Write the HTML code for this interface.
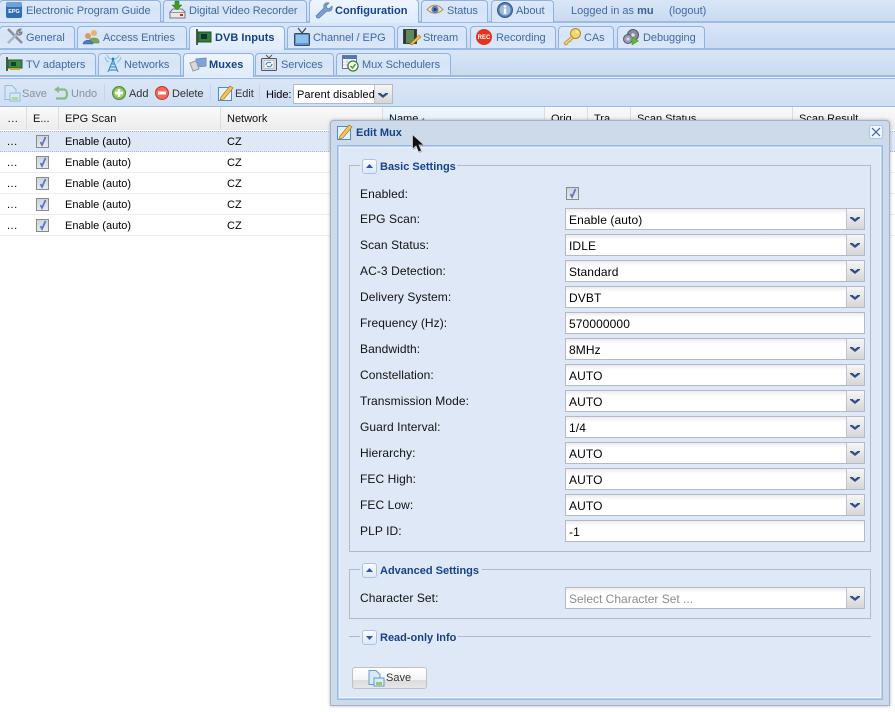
<!DOCTYPE html>
<html><head><meta charset="utf-8"><style>
html,body{margin:0;padding:0;width:895px;height:712px;overflow:hidden;background:#fff;font-family:"Liberation Sans",sans-serif}
div,span,svg{position:absolute;box-sizing:border-box}
svg{overflow:visible}
.bar{left:0;width:895px;background:linear-gradient(#dae6f6,#cedff5 60%,#cbdaee);border-bottom:2px solid #99bbe8}
.t{height:22px;border:1px solid #8db2e3;border-bottom:none;border-radius:4px 4px 0 0;background:linear-gradient(#dfeaf9,#d6e4f7 40%,#dbe8fb);color:#416aa3;font-size:11px;line-height:21px;white-space:nowrap;letter-spacing:-.06px}
.t b{position:absolute;top:0;color:#15428b;font-size:11px;letter-spacing:.03px}
.t span{top:0}
.t.a{background:linear-gradient(#eff5fd,#deecfd);height:24px}
.h{top:107px;height:23px;background:linear-gradient(#fafafa,#ececec);border-right:1px solid #ddd;font-size:11px;line-height:24px;color:#111;padding-left:5px;overflow:hidden;white-space:nowrap}
.r{left:0;width:895px;height:21px;border-bottom:1px solid #ededed;background:#fff}
.c{font-size:11px;color:#000;line-height:21px;top:1px;white-space:nowrap}
.z .c{top:0}
.k{width:13px;height:13px;border:1px solid #8a8a8a;background:linear-gradient(#cdd4de,#e6eaf0)}
.tb{font-size:11px;top:87px;line-height:15px;color:#333;white-space:nowrap;letter-spacing:-.05px}
.sep{top:84px;width:1px;height:17px;background:#c5d6ec}
.l{left:360px;font-size:12px;color:#111;white-space:nowrap;line-height:14px;letter-spacing:.08px}
.f{left:565px;width:300px;height:22px;border:1px solid #b5b8c8;background:linear-gradient(#ececec,#fff 5px);font-size:12px;line-height:22px;color:#000;padding-left:3px;white-space:nowrap;letter-spacing:.1px}
.f i{position:absolute;right:0;top:0;width:17px;height:20px;border-left:1px solid #c0c3cf;background:linear-gradient(#f6f6f6,#d6d6d6)}
.f i:after{content:"";position:absolute;left:3px;top:8px;width:10px;height:5px;background:#2f4f8c;clip-path:polygon(0 0,25% 0,50% 40%,75% 0,100% 0,100% 20%,50% 100%,0 20%)}
.lg{height:15px;background:#dfe8f6;font-size:11px;font-weight:bold;color:#15428b;line-height:15px;white-space:nowrap}
.lg span{top:1px}
.tg{width:15px;height:15px;border:1px solid #a9c3ea;border-radius:3px;background:linear-gradient(#fbfdff,#dce8fa)}
.tg:after{content:"";position:absolute;left:3px;width:7px;height:4px;background:#2f55a4}
.u:after{top:4px;clip-path:polygon(50% 0,100% 100%,0 100%)}
.d:after{top:5px;clip-path:polygon(0 0,100% 0,50% 100%)}
</style></head><body>

<!-- row 1 -->
<div class="bar" style="top:0;height:23px"></div>
<div class="t" style="left:-1px;top:0;width:162px"><span style="left:26px">Electronic Program Guide</span></div>
<div class="t" style="left:163px;top:0;width:144px"><span style="left:25px">Digital Video Recorder</span></div>
<div class="t" style="left:421px;top:0;width:67px"><span style="left:25px">Status</span></div>
<div class="t" style="left:491px;top:0;width:63px"><span style="left:24px">About</span></div>
<div class="t a" style="left:309px;top:-1px;width:110px"><b style="left:25px;top:1px">Configuration</b></div>
<div style="left:571px;top:4px;font-size:11px;color:#416aa3;white-space:nowrap;line-height:14px">Logged in as <b style="color:#3f5f92">mu</b></div>
<div style="left:669px;top:4px;font-size:11px;color:#416aa3;line-height:14px">(logout)</div>

<svg style="left:6px;top:2px" width="16" height="16"><rect width="16" height="16" rx="2" fill="#2f6fb5"/><rect y="0" width="16" height="5" rx="2" fill="#6fa3d6"/><text x="8" y="11" font-size="5.500" font-weight="bold" fill="#fff" text-anchor="middle" font-family="Liberation Sans,sans-serif">EPG</text></svg>
<svg style="left:169px;top:1px" width="17" height="18"><path d="M1 11 4 8h9l3 3v6H1z" fill="#e8e8e8" stroke="#777"/><path d="M1.500 11.500h14" stroke="#999"/><rect x="11" y="13" width="3" height="2" fill="#d22"/><path d="M6 0h4v4h3l-5 5-5-5h3z" fill="#3c9a28" stroke="#2b6f1c" stroke-width=".5"/></svg>
<svg style="left:315px;top:2px" width="17" height="17"><path d="M2 16 1 14l8-8c-1-3 1-6 5-5l-3 3 1 2 2 1 3-3c1 4-2 6-5 5l-8 7z" fill="#7d9fd0" stroke="#5478ad" stroke-width=".7"/></svg>
<svg style="left:427px;top:3px" width="16" height="13"><path d="M0 6.500Q8-2 16 6.500 8 14 0 6.500z" fill="#f1e2c8" stroke="#b78d55"/><circle cx="8" cy="6.500" r="3.600" fill="#5a7fc4"/><circle cx="8" cy="6.500" r="1.500" fill="#223b70"/></svg>
<svg style="left:497px;top:2px" width="16" height="16"><circle cx="8" cy="8" r="7.500" fill="#4f7fb8" stroke="#36598c"/><circle cx="8" cy="8" r="5.500" fill="#9dbbdd"/><rect x="6.800" y="6.500" width="2.400" height="5.500" fill="#fff"/><rect x="6.800" y="3.500" width="2.400" height="2" fill="#fff"/></svg>

<!-- row 2 -->
<div class="bar" style="top:23px;height:27px"></div>
<div class="t" style="left:-1px;top:26px;width:76px;line-height:22px"><span style="left:26px">General</span></div>
<div class="t" style="left:77px;top:26px;width:110px;line-height:22px"><span style="left:25px">Access Entries</span></div>
<div class="t" style="left:287px;top:26px;width:108px;line-height:22px"><span style="left:25px">Channel / EPG</span></div>
<div class="t" style="left:397px;top:26px;width:70px;line-height:22px"><span style="left:25px">Stream</span></div>
<div class="t" style="left:470px;top:26px;width:86px;line-height:22px"><span style="left:25px">Recording</span></div>
<div class="t" style="left:558px;top:26px;width:56px;line-height:22px"><span style="left:25px">CAs</span></div>
<div class="t" style="left:617px;top:26px;width:88px;line-height:22px"><span style="left:25px">Debugging</span></div>
<div class="t a" style="left:189px;top:26px;width:96px;height:24px;line-height:22px"><b style="left:25px">DVB Inputs</b></div>

<svg style="left:6px;top:28px" width="17" height="17"><path d="M2 1 16 15" stroke="#8a8f96" stroke-width="2.500"/><path d="M15 2 2 15" stroke="#a6b6cc" stroke-width="2.500"/><path d="M11 6c-1-3 1-5 4-5l-2 2 1 2 2-1c0 3-3 4-5 2z" fill="#a8b2c0" stroke="#778"/></svg>
<svg style="left:83px;top:29px" width="17" height="16"><circle cx="11" cy="4" r="3" fill="#e9b36d"/><path d="M6 12c0-4 10-4 10 0v2H6z" fill="#7aa75a" stroke="#5b7f3f" stroke-width=".5"/><circle cx="5" cy="7" r="3" fill="#d89a68"/><path d="M0 15c0-5 10-5 10 0z" fill="#4f7cc0" stroke="#345a94" stroke-width=".5"/></svg>
<svg style="left:196px;top:29px" width="16" height="16"><rect x="0" y="0" width="2" height="16" fill="#555"/><rect x="2" y="3" width="13" height="10" fill="#2f7d3c" stroke="#1d5527"/><rect x="5" y="5" width="6" height="5" fill="#133"/></svg>
<svg style="left:294px;top:28px" width="16" height="18"><path d="M4 0 8 5l4-5" fill="none" stroke="#444" stroke-width="1.200"/><rect x=".5" y="5.500" width="15" height="12" rx="1" fill="#5d93d8" stroke="#3c4a5e"/><rect x="2" y="7" width="12" height="8" fill="#8dc0ec"/></svg>
<svg style="left:403px;top:29px" width="18" height="16"><rect x=".5" y=".5" width="13" height="14" fill="#5d8a5a" stroke="#444"/><rect x="1" y="1" width="2" height="13" fill="#333"/><rect x="11" y="1" width="2" height="13" fill="#333"/><path d="M7 15 16 6l2 2-9 8z" fill="#f0c24a" stroke="#a67c18" stroke-width=".6"/></svg>
<svg style="left:476px;top:29px" width="16" height="16"><circle cx="8" cy="8" r="8" fill="#e5331f"/><text x="8" y="10" font-size="6" font-weight="bold" fill="#fff" text-anchor="middle" font-family="Liberation Sans,sans-serif">REC</text></svg>
<svg style="left:564px;top:28px" width="17" height="18"><circle cx="11.500" cy="5.500" r="5" fill="#f3d56e" stroke="#b48a26"/><path d="M8 8 0 15l1.500 2 2-1 1-2 2-.5 1-2 2-1z" fill="#f3d472" stroke="#b48a26" stroke-width=".8"/><circle cx="13" cy="4" r="1.200" fill="#fff4c4"/></svg>
<svg style="left:623px;top:29px" width="17" height="16"><circle cx="10" cy="6" r="5.500" fill="#8a8a9e" stroke="#55556b"/><circle cx="5" cy="10" r="4.500" fill="#9a9ab0" stroke="#55556b"/><circle cx="5" cy="10" r="1.500" fill="#dde"/><circle cx="10" cy="6" r="1.800" fill="#dde"/><path d="M9 8 15.500 12 9 16z" fill="#5ec02a" stroke="#3a8a18" stroke-width=".5"/></svg>

<!-- row 3 -->
<div class="bar" style="top:50px;height:27px"></div>
<div class="t" style="left:-1px;top:53px;width:97px;line-height:22px"><span style="left:26px">TV adapters</span></div>
<div class="t" style="left:98px;top:53px;width:83px;line-height:22px"><span style="left:25px">Networks</span></div>
<div class="t" style="left:255px;top:53px;width:79px;line-height:22px"><span style="left:25px">Services</span></div>
<div class="t" style="left:336px;top:53px;width:115px;line-height:22px"><span style="left:25px">Mux Schedulers</span></div>
<div class="t a" style="left:183px;top:53px;width:71px;line-height:22px"><b style="left:25px">Muxes</b></div>

<svg style="left:6px;top:57px" width="17" height="14"><rect x="0" y="0" width="2" height="14" fill="#555"/><rect x="2" y="3" width="14" height="8" fill="#3b8a45" stroke="#245c2c"/><rect x="5" y="5" width="5" height="4" fill="#142"/><rect x="4" y="11" width="10" height="2" fill="#c9a63a"/></svg>
<svg style="left:105px;top:55px" width="16" height="18"><path d="M8 5 3 17M8 5l5 12M5 12h6M4 15h8M6 9h4" stroke="#3f93cf" fill="none" stroke-width="1.200"/><path d="M2 0c1 3 3 4 4 4M14 0c-1 3-3 4-4 4M0 2c1 4 3 5 4 5M16 2c-1 4-3 5-4 5" stroke="#7cc0e8" fill="none"/><circle cx="8" cy="4" r="1.500" fill="#2f7fb8"/></svg>
<svg style="left:190px;top:58px" width="17" height="14"><path d="M6 1 16 0v8L6 9z" fill="#7aa4de" stroke="#7d8ea8"/><path d="M0 5 6 3l3 8-6 2z" fill="#d8d8d8" stroke="#999"/></svg>
<svg style="left:261px;top:55px" width="16" height="17"><path d="M5 0 8 3l3-3" stroke="#555" fill="none"/><rect x=".5" y="3.500" width="15" height="12" rx="1" fill="#d9dde3" stroke="#4e5666"/><rect x="3" y="5.500" width="10" height="8" fill="#f2f5f9" stroke="#8f98a6" stroke-width=".5"/><path d="M5 10a3 3 0 0 1 5-2M11 9a3 3 0 0 1-5 2" stroke="#3e78b8" fill="none"/></svg>
<svg style="left:342px;top:55px" width="18" height="18"><rect x=".5" y=".5" width="14" height="13" fill="#fff" stroke="#6a7a94"/><rect x="1" y="1" width="13" height="3" fill="#4f78b8"/><path d="M1 7h13M1 10h13M5 4v9M10 4v9" stroke="#b5c0d2" stroke-width=".7"/><circle cx="11" cy="11" r="5" fill="#fff" stroke="#3a7d2a" stroke-width="1.200"/><path d="M8.500 11l2 2 3-4" stroke="#3fa02a" fill="none" stroke-width="1.500"/></svg>

<!-- toolbar -->
<div style="left:0;top:77px;width:895px;height:1px;background:#e8f0fb"></div>
<div style="left:0;top:78px;width:895px;height:29px;background:linear-gradient(#dae6f6,#cfdff3);border-top:1px solid #99bbe8;border-bottom:1px solid #99bbe8"></div>
<svg style="left:4px;top:85px;opacity:.55" width="16" height="16"><path d="M1 .500h7l4 4v4H11v6H1z" fill="#dbe8f8" stroke="#6a9bd0"/><rect x="6" y="8" width="10" height="8" fill="#d9edf9" stroke="#5a9bd0"/><rect x="8" y="12" width="6" height="3" fill="#9bc95a"/></svg>
<div class="tb" style="left:22px;color:#8a929c">Save</div>
<svg style="left:54px;top:86px;opacity:.55" width="14" height="14"><path d="M2 3.500h8c4 0 4 9 0 9H2" fill="none" stroke="#4c9a2a" stroke-width="2.200"/><path d="M5 0 0 3.500 5 7z" fill="#4c9a2a"/></svg>
<div class="tb" style="left:71px;color:#8a929c">Undo</div>
<div class="sep" style="left:104px"></div>
<svg style="left:112px;top:86px" width="14" height="14"><circle cx="7" cy="7" r="6.500" fill="#84bb5c" stroke="#4e8a2c"/><circle cx="7" cy="7" r="4.500" fill="#a6d47e"/><path d="M7 3v8M3 7h8" stroke="#fff" stroke-width="2.400"/></svg>
<div class="tb" style="left:129px">Add</div>
<svg style="left:155px;top:86px" width="14" height="14"><circle cx="7" cy="7" r="6.500" fill="#ef6a5a" stroke="#c23a2a"/><rect x="3" y="5.500" width="8" height="3" fill="#fff"/></svg>
<div class="tb" style="left:172px">Delete</div>
<div class="sep" style="left:210px"></div>
<svg style="left:218px;top:85px" width="15" height="16"><rect x=".5" y="2.500" width="13" height="13" fill="#e8f2fc" stroke="#4a8ad0"/><path d="M3 12 12 1l3 2-9 11-4 1z" fill="#f2c55a" stroke="#a8791c" stroke-width=".7"/></svg>
<div class="tb" style="left:235px">Edit</div>
<div class="sep" style="left:259px"></div>
<div class="tb" style="left:266px;top:89px;color:#000;line-height:13px">Hide:</div>
<div class="f" style="left:293px;top:84px;width:100px;height:20px;line-height:20px;background:#fff;font-size:11px;padding-left:3px;overflow:hidden">Parent disabled<i style="height:18px;width:17px"></i></div>

<!-- grid header -->
<div style="left:0;top:107px;width:895px;height:23px;background:#efefef"></div>
<div class="h" style="left:0;width:27px;text-align:center;padding:0;letter-spacing:.5px">...</div>
<div class="h" style="left:27px;width:32px;padding-left:6px">E...</div>
<div class="h" style="left:59px;width:162px;padding-left:6px">EPG Scan</div>
<div class="h" style="left:221px;width:162px;padding-left:6px">Network</div>
<div class="h" style="left:383px;width:162px;padding-left:6px;background:linear-gradient(#f0f7fe,#dfebfa)">Name <span style="left:38px;top:0;color:#6f8fc0;font-size:9px">▴</span></div>
<div class="h" style="left:545px;width:43px;padding-left:6px">Orig...</div>
<div class="h" style="left:588px;width:43px;padding-left:6px">Tra...</div>
<div class="h" style="left:631px;width:162px;padding-left:6px">Scan Status</div>
<div class="h" style="left:793px;width:102px;padding-left:6px;border-right:none">Scan Result</div>

<!-- rows -->
<div class="r z" style="top:131px;background:#dfe8f6;border-top:1px dotted #a3bae9;border-bottom:1px dotted #a3bae9"><span class="c" style="left:7px;letter-spacing:.5px">...</span><span class="c" style="left:65px">Enable (auto)</span><span class="c" style="left:227px">CZ</span></div>
<div class="r" style="top:152px"><span class="c" style="left:7px;letter-spacing:.5px">...</span><span class="c" style="left:65px">Enable (auto)</span><span class="c" style="left:227px">CZ</span></div>
<div class="r" style="top:173px"><span class="c" style="left:7px;letter-spacing:.5px">...</span><span class="c" style="left:65px">Enable (auto)</span><span class="c" style="left:227px">CZ</span></div>
<div class="r" style="top:194px"><span class="c" style="left:7px;letter-spacing:.5px">...</span><span class="c" style="left:65px">Enable (auto)</span><span class="c" style="left:227px">CZ</span></div>
<div class="r" style="top:215px"><span class="c" style="left:7px;letter-spacing:.5px">...</span><span class="c" style="left:65px">Enable (auto)</span><span class="c" style="left:227px">CZ</span></div>
<div class="k" style="left:36px;top:135px"><svg style="left:1px;top:0" width="10" height="11"><path d="M2.500 6l1.500 3 3.500-8" stroke="#5a76bc" stroke-width="1.700" fill="none"/></svg></div>
<div class="k" style="left:36px;top:156px"><svg style="left:1px;top:0" width="10" height="11"><path d="M2.500 6l1.500 3 3.500-8" stroke="#5a76bc" stroke-width="1.700" fill="none"/></svg></div>
<div class="k" style="left:36px;top:177px"><svg style="left:1px;top:0" width="10" height="11"><path d="M2.500 6l1.500 3 3.500-8" stroke="#5a76bc" stroke-width="1.700" fill="none"/></svg></div>
<div class="k" style="left:36px;top:198px"><svg style="left:1px;top:0" width="10" height="11"><path d="M2.500 6l1.500 3 3.500-8" stroke="#5a76bc" stroke-width="1.700" fill="none"/></svg></div>
<div class="k" style="left:36px;top:219px"><svg style="left:1px;top:0" width="10" height="11"><path d="M2.500 6l1.500 3 3.500-8" stroke="#5a76bc" stroke-width="1.700" fill="none"/></svg></div>

<!-- window -->
<div style="left:330px;top:120px;width:560px;height:586px;background:#cddaea;border:1px solid #a3b3c6;border-radius:4px 4px 0 0;box-shadow:0 0 3px rgba(0,0,0,.3)"></div>
<div style="left:337px;top:145px;width:546px;height:555px;background:#b9cfee;border:1px solid #99bbe8"></div>
<div style="left:339px;top:147px;width:542px;height:551px;background:#dfe8f6;border:1px solid #eff4fb"></div>
<svg style="left:337px;top:124px" width="15" height="16"><rect x=".5" y="2.500" width="13" height="13" fill="#e8f2fc" stroke="#4a8ad0"/><path d="M3 12 12 1l3 2-9 11-4 1z" fill="#f2c55a" stroke="#a8791c" stroke-width=".7"/></svg>
<div style="left:356px;top:126px;font-size:11px;font-weight:bold;color:#15428b;line-height:14px;white-space:nowrap">Edit Mux</div>
<div style="left:869px;top:125px;width:14px;height:14px;border:1px solid #a9c3ea;border-radius:2px;background:#f0f6fe"><svg style="left:1px;top:1px" width="10" height="10"><path d="M1 1l8 8M9 1l-8 8" stroke="#3a5ca8" stroke-width="1.200"/></svg></div>

<!-- fieldsets -->
<div style="left:349px;top:165px;width:522px;height:387px;border:1px solid #b5b8c8"></div>
<div style="left:349px;top:569px;width:522px;height:50px;border:1px solid #b5b8c8"></div>
<div style="left:349px;top:636px;width:522px;height:1px;background:#b5b8c8"></div>

<div class="lg" style="left:360px;top:159px;width:97px"><span style="left:20px">Basic Settings</span></div><div class="tg u" style="left:362px;top:159px"></div>
<div class="lg" style="left:360px;top:563px;width:122px"><span style="left:20px">Advanced Settings</span></div><div class="tg u" style="left:362px;top:563px"></div>
<div class="lg" style="left:360px;top:630px;width:98px"><span style="left:20px">Read-only Info</span></div><div class="tg d" style="left:362px;top:630px"></div>

<div class="l" style="top:187px">Enabled:</div>
<div class="k" style="left:566px;top:187px"><svg style="left:1px;top:0" width="10" height="11"><path d="M2.500 6l1.500 3 3.500-8" stroke="#5a76bc" stroke-width="1.700" fill="none"/></svg></div>

<div class="l" style="top:212px">EPG Scan:</div><div class="f" style="top:208px">Enable (auto)<i></i></div>
<div class="l" style="top:238px">Scan Status:</div><div class="f" style="top:234px">IDLE<i></i></div>
<div class="l" style="top:264px">AC-3 Detection:</div><div class="f" style="top:260px">Standard<i></i></div>
<div class="l" style="top:290px">Delivery System:</div><div class="f" style="top:286px">DVBT<i></i></div>
<div class="l" style="top:316px">Frequency (Hz):</div><div class="f" style="top:312px">570000000</div>
<div class="l" style="top:342px">Bandwidth:</div><div class="f" style="top:338px">8MHz<i></i></div>
<div class="l" style="top:368px">Constellation:</div><div class="f" style="top:364px">AUTO<i></i></div>
<div class="l" style="top:394px">Transmission Mode:</div><div class="f" style="top:390px">AUTO<i></i></div>
<div class="l" style="top:420px">Guard Interval:</div><div class="f" style="top:416px">1/4<i></i></div>
<div class="l" style="top:446px">Hierarchy:</div><div class="f" style="top:442px">AUTO<i></i></div>
<div class="l" style="top:472px">FEC High:</div><div class="f" style="top:468px">AUTO<i></i></div>
<div class="l" style="top:498px">FEC Low:</div><div class="f" style="top:494px">AUTO<i></i></div>
<div class="l" style="top:524px">PLP ID:</div><div class="f" style="top:520px">-1</div>
<div class="l" style="top:591px">Character Set:</div><div class="f" style="top:587px;color:#8c8c8c;letter-spacing:0">Select Character Set ...<i></i></div>

<div style="left:352px;top:667px;width:75px;height:22px;border:1px solid #c0c0c0;border-radius:3px;background:linear-gradient(#fff,#f4f4f4 60%,#dcdcdc 60%,#e6e6e6)"></div>
<svg style="left:368px;top:670px" width="16" height="16"><path d="M1 .500h7l4 4v4H11v6H1z" fill="#dbe8f8" stroke="#6a9bd0"/><rect x="6" y="8" width="10" height="8" fill="#d9edf9" stroke="#5a9bd0"/><rect x="8" y="12" width="6" height="3" fill="#9bc95a"/></svg>
<div style="left:386px;top:671px;font-size:11px;color:#333;line-height:14px">Save</div>

<!-- cursor -->
<svg style="left:412px;top:134px" width="14" height="20"><path d="M1.500 1.500V16L5 13l2.500 6 3-1.300L8 12l5 0z" fill="#000" opacity=".25"/><path d="M.5.500V15L4 12l2.500 6 3-1.300L7 11l5 0z" fill="#111" stroke="#ddd" stroke-width=".7"/></svg>
</body></html>
